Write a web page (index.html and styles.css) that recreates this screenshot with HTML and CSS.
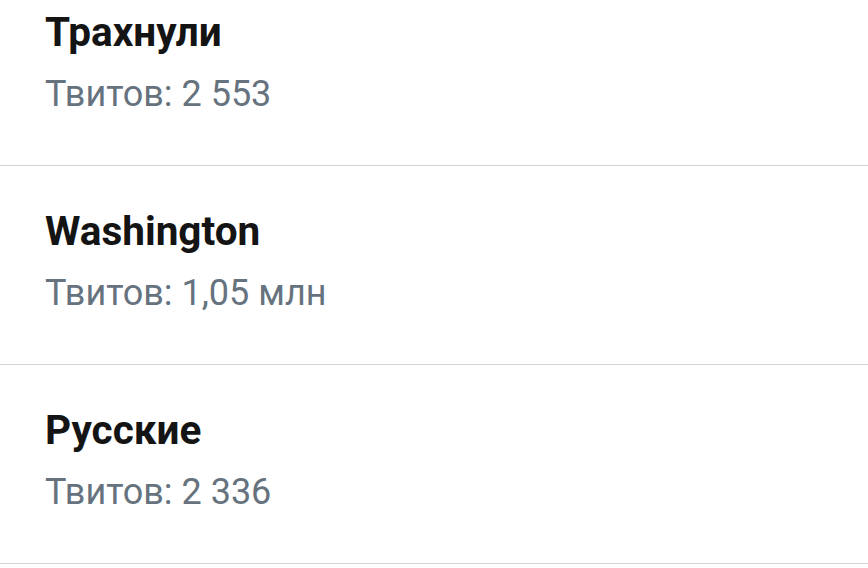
FILE: index.html
```html
<!DOCTYPE html>
<html lang="ru">
<head>
  <meta charset="UTF-8" />
  <title>Тренды</title>
  <link rel="stylesheet" href="styles.css">
</head>
<body>
  <div id="trends">
    <div class="trend">
      <div class="trend-name">Трахнули</div>
      <div class="trend-count">Твитов: 2 553</div>
    </div>
    <div class="trend">
      <div class="trend-name">Washington</div>
      <div class="trend-count">Твитов: 1,05 млн</div>
    </div>
    <div class="trend">
      <div class="trend-name">Русские</div>
      <div class="trend-count">Твитов: 2 336</div>
    </div>
  </div>
</body>
</html>
```

FILE: styles.css
```css
body {
  font-family: Roboto, "Noto Sans", Arial, sans-serif;
  margin: 0; padding: 0;
  background: #fff;
  overflow: hidden;
}
#trends {
  margin-top: -33px;
}
.trend {
  height: 199px;
  box-sizing: border-box;
  padding: 41px 45px 0;
  border-bottom: 1px solid #d3d3d3;
}
.trend-name {
  font-size: 40.5px;
  line-height: 48px;
  font-weight: bold;
  color: #141414;
}
.trend-count {
  font-size: 36px;
  line-height: 48px;
  margin-top: 14px;
  color: #66737e;
}
```
